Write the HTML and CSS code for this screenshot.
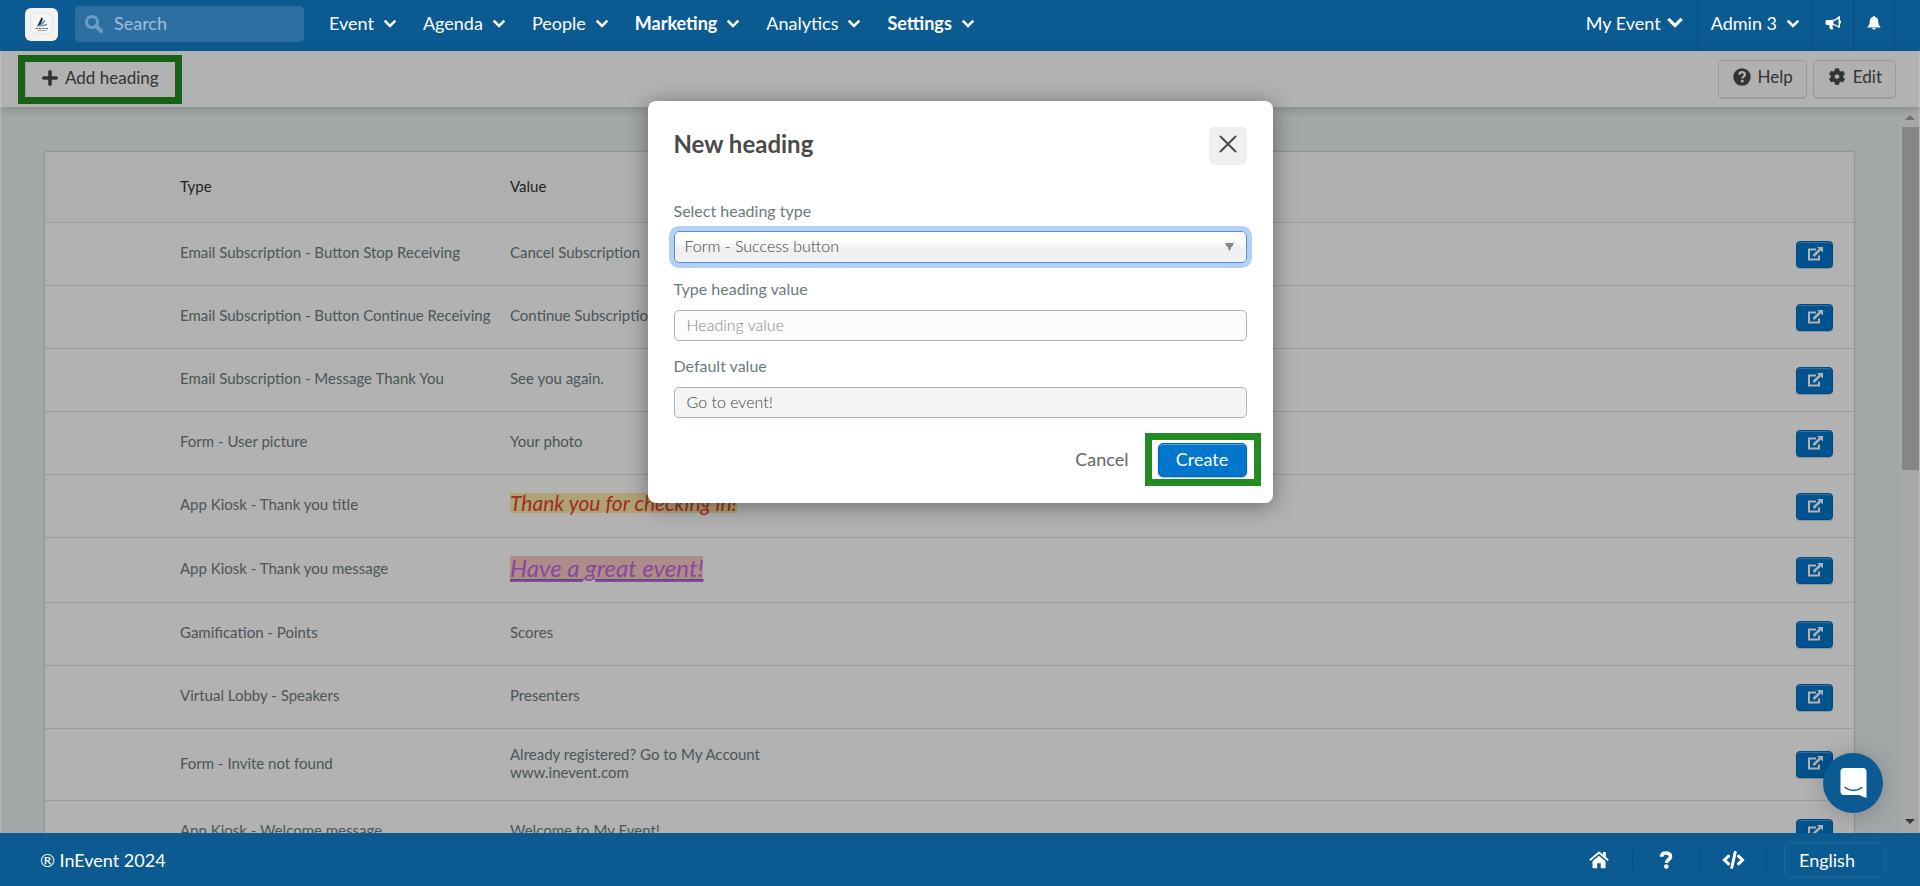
FILE: index.html
```html
<!DOCTYPE html>
<html lang="en">
<head>
<meta charset="utf-8">
<title>InEvent – Headings</title>
<link rel="stylesheet" href="styles.css">
</head>
<body>
<svg class="defs" width="0" height="0" aria-hidden="true">
  <symbol id="chevron" viewBox="0 0 12 8"><path d="M1.500 1.500 6 6l4.500-4.500" fill="none" stroke="currentColor" stroke-width="2.500" stroke-linecap="square"/></symbol>
  <symbol id="external" viewBox="0 0 16 14"><path d="M9 2.500H2v10h10V8.500" fill="none" stroke="currentColor" stroke-width="2"/><path d="M6.500 9 13 2.500" stroke="currentColor" stroke-width="2.500"/><path d="M10 0h6v5.500z" fill="currentColor"/></symbol>
</svg>

<header class="topbar">
  <a class="logo" href="#" aria-label="InEvent home">
    <svg viewBox="0 0 33 33" width="33" height="33"><rect x="5.500" y="5" width="22" height="21" rx="6" fill="#f5f5f5" stroke="#e2e2e2"/><path d="M16.500 9.500l1.500.8-2.500 6.700-3.500 1.500z" fill="#222"/><path d="M19.500 12l1 1-4 4.500-4 1z" fill="#3f8fc4"/><path d="M22.500 15.500l-1.500 2-7 1.200z" fill="#3a6a8c"/><path d="M10.500 20.500h13" stroke="#666" stroke-dasharray="2.500 .8"/><path d="M13 22.500h9" stroke="#888" stroke-dasharray="1.500 .7"/></svg>
  </a>
  <label class="search">
    <svg viewBox="0 0 18 18" width="18" height="18"><circle cx="7" cy="7" r="5.500" fill="none" stroke="currentColor" stroke-width="3"/><path d="M11 11l5 5" stroke="currentColor" stroke-width="4" stroke-linecap="round"/></svg>
    <input type="search" placeholder="Search" aria-label="Search">
  </label>
  <nav class="menu">
    <a href="#">Event <svg class="chev"><use href="#chevron"/></svg></a>
    <a href="#">Agenda <svg class="chev"><use href="#chevron"/></svg></a>
    <a href="#">People <svg class="chev"><use href="#chevron"/></svg></a>
    <a href="#" class="strong">Marketing <svg class="chev"><use href="#chevron"/></svg></a>
    <a href="#">Analytics <svg class="chev"><use href="#chevron"/></svg></a>
    <a href="#" class="strong">Settings <svg class="chev"><use href="#chevron"/></svg></a>
  </nav>
  <div class="account">
    <a class="cell" href="#">My Event <svg class="chev big"><use href="#chevron"/></svg></a>
    <a class="cell" href="#">Admin 3 <svg class="chev"><use href="#chevron"/></svg></a>
    <a class="cell icon" href="#" aria-label="Announcements"><svg viewBox="0 0 16 14" width="16" height="14" fill="currentColor"><path fill-rule="evenodd" d="M14 0c.6 0 1 .4 1 1v3.500a1.500 1.500 0 0 1 0 3V11c0 .6-.4 1-1 1-2-1.600-4-2.500-6-2.800-.7.300-.8 1-.3 1.500-.4.600 0 1.200.8 1.800-.5 1.200-2.600 1.200-3.500.5-.5-1.300-1-2.500-.6-4H2A1.500 1.500 0 0 1 .5 7.500v-2A1.500 1.500 0 0 1 2 4h4.500C9 4 11.500 2.700 14 0zm-.5 2.500c-1.600 1.400-3.300 2.300-5 2.600v2.800c1.700.3 3.400 1.100 5 2.400z"/></svg></a>
    <a class="cell icon" href="#" aria-label="Notifications"><svg viewBox="0 0 14 14" width="14" height="14" fill="currentColor"><path d="M7 0c.7 0 1 .4 1 1 2.200.5 3.200 2 3.200 4.500 0 2.600.8 4 2.300 5 0 .6-.4 1-1 1h-11c-.6 0-1-.4-1-1 1.500-1 2.300-2.400 2.300-5C2.800 3 3.800 1.500 6 1c0-.6.300-1 1-1zM5.300 12h3.400c-.2 1-.8 1.700-1.700 1.700S5.500 13 5.300 12z"/></svg></a>
  </div>
</header>

<main class="stage">
  <div class="toolbar">
    <div class="highlight highlight-add"><button class="tool flat" type="button"><svg viewBox="0 0 16 16" width="16" height="16"><path d="M8 1.800v12.400M1.800 8h12.400" stroke="currentColor" stroke-width="3.600" stroke-linecap="round"/></svg>Add heading</button></div>
    <div class="tools">
      <button class="tool" type="button"><svg viewBox="0 0 18 18" width="18" height="18"><circle cx="9" cy="9" r="8.700" fill="currentColor"/><path d="M6.200 6.700C6.500 4.900 7.600 4.200 9 4.200c1.700 0 2.900 1 2.900 2.400 0 2-2.600 1.900-2.600 3.900" fill="none" stroke="#fff" stroke-width="2.200"/><circle cx="9.300" cy="13.200" r="1.400" fill="#fff"/></svg>Help</button>
      <button class="tool" type="button"><svg viewBox="0 0 18 18" width="18" height="18"><path fill="currentColor" fill-rule="evenodd" stroke="currentColor" stroke-width=".8" stroke-linejoin="round" d="M7.300.8h3.400l.5 2.300 1.500.8 2.200-.7 1.700 2.900-1.700 1.600v1.700l1.700 1.600-1.700 3-2.200-.7-1.500.8-.5 2.300H7.300l-.5-2.300-1.500-.8-2.200.7-1.700-3 1.700-1.600V7.700L1.400 6.100l1.700-2.900 2.200.7 1.500-.8zM9 5.900a2.700 2.700 0 1 0 0 5.400A2.700 2.700 0 0 0 9 5.900z"/></svg>Edit</button>
    </div>
  </div>

  <div class="scroller">
    <div class="page">
      <table class="grid">
        <colgroup><col class="c-pad"><col class="c-type"><col><col class="c-act"></colgroup>
        <thead><tr><th></th><th scope="col">Type</th><th scope="col">Value</th><th></th></tr></thead>
        <tbody>
          <tr><td></td><td>Email Subscription - Button Stop Receiving</td><td>Cancel Subscription</td><td><button class="edit" type="button" aria-label="Edit"><svg><use href="#external"/></svg></button></td></tr>
          <tr><td></td><td>Email Subscription - Button Continue Receiving</td><td>Continue Subscription</td><td><button class="edit" type="button" aria-label="Edit"><svg><use href="#external"/></svg></button></td></tr>
          <tr><td></td><td>Email Subscription - Message Thank You</td><td>See you again.</td><td><button class="edit" type="button" aria-label="Edit"><svg><use href="#external"/></svg></button></td></tr>
          <tr><td></td><td>Form - User picture</td><td>Your photo</td><td><button class="edit" type="button" aria-label="Edit"><svg><use href="#external"/></svg></button></td></tr>
          <tr><td></td><td>App Kiosk - Thank you title</td><td><em class="thanks">Thank you for checking in!</em></td><td><button class="edit" type="button" aria-label="Edit"><svg><use href="#external"/></svg></button></td></tr>
          <tr class="tall"><td></td><td>App Kiosk - Thank you message</td><td><em class="great"><span>Have a great event!</span></em></td><td><button class="edit" type="button" aria-label="Edit"><svg><use href="#external"/></svg></button></td></tr>
          <tr><td></td><td>Gamification - Points</td><td>Scores</td><td><button class="edit" type="button" aria-label="Edit"><svg><use href="#external"/></svg></button></td></tr>
          <tr><td></td><td>Virtual Lobby - Speakers</td><td>Presenters</td><td><button class="edit" type="button" aria-label="Edit"><svg><use href="#external"/></svg></button></td></tr>
          <tr class="double"><td></td><td>Form - Invite not found</td><td>Already registered? Go to My Account<br>www.inevent.com</td><td><button class="edit" type="button" aria-label="Edit"><svg><use href="#external"/></svg></button></td></tr>
          <tr><td></td><td>App Kiosk - Welcome message</td><td>Welcome to My Event!</td><td><button class="edit" type="button" aria-label="Edit"><svg><use href="#external"/></svg></button></td></tr>
        </tbody>
      </table>
    </div>
    <div class="bar" aria-hidden="true"><i class="up"></i><i class="thumb"></i><i class="down"></i></div>
  </div>

  <div class="overlay">
    <form class="modal" role="dialog" aria-labelledby="title">
      <div class="modal-head">
        <h1 id="title">New heading</h1>
        <button class="close" type="button" aria-label="Close"><svg viewBox="0 0 18 18" width="18" height="18"><path d="M1.500 1.500l15 15M16.500 1.500l-15 15" stroke="currentColor" stroke-width="2" stroke-linecap="round"/></svg></button>
      </div>
      <label for="type">Select heading type</label>
      <select id="type"><option>Form - Success button</option></select>
      <label for="value">Type heading value</label>
      <input id="value" type="text" placeholder="Heading value">
      <label for="default">Default value</label>
      <input id="default" type="text" value="Go to event!" readonly>
      <div class="actions">
        <button class="cancel" type="button">Cancel</button>
        <div class="highlight highlight-create"><button class="create" type="submit">Create</button></div>
      </div>
    </form>
  </div>
</main>

<footer class="footer">
  <span>® InEvent 2024</span>
  <div class="links">
    <a href="#" aria-label="Home"><svg viewBox="0 0 20 18" width="20" height="18" fill="currentColor"><path d="M10 4.800l6.500 5.500v6.200c0 .5-.3.800-.8.800h-3.900v-5H8.200v5H4.300c-.5 0-.8-.3-.8-.8v-6.200z"/><path d="M.8 9.300L10 1.500l9.200 7.800" fill="none" stroke="currentColor" stroke-width="1.900"/><path d="M14 1h2.800v6L14 4.500z"/></svg></a>
    <a href="#" aria-label="Help"><svg viewBox="0 0 14 18" width="14" height="18"><path d="M2.300 5.800C2.700 3 4.500 2 7 2c2.800 0 4.500 1.500 4.500 3.500 0 3.200-4 2.800-4 6.500" fill="none" stroke="currentColor" stroke-width="3.600"/><circle cx="7.300" cy="15.600" r="2.300" fill="currentColor"/></svg></a>
    <a href="#" aria-label="Embed"><svg viewBox="0 0 23 18" width="23" height="18"><path d="M6.500 5.200L2.500 9l4 3.800M16.500 5.200l4 3.800-4 3.800M13.200 1.500l-3.400 15" fill="none" stroke="currentColor" stroke-width="3" stroke-linecap="round"/></svg></a>
    <select class="lang" aria-label="Language"><option>English</option></select>
  </div>
</footer>

<button class="chat" type="button" aria-label="Open chat"><svg viewBox="0 0 27 30" width="27" height="30"><path d="M4 0h19a3.500 3.500 0 0 1 3.500 3.500V30L19 27H4a3.500 3.500 0 0 1-3.500-3.500v-20A3.500 3.500 0 0 1 4 0z" fill="#fff"/><path d="M5 19.500c5 4 12 4 17 0" fill="none" stroke="#0c5a92" stroke-width="1.600" stroke-linecap="round"/></svg></button>
</body>
</html>
```
FILE: styles.css
```css
* { box-sizing: border-box; }
body {
  margin: 0;
  height: 100vh;
  display: flex;
  flex-direction: column;
  overflow: hidden;
  font: 15px/18px Lato, "Open Sans", sans-serif;
  color: #6d7a7d;
  background: #e9f0f1;
}
a { color: inherit; text-decoration: none; }
button, input, select { font: inherit; color: inherit; }
button { cursor: pointer; }
.defs { position: absolute; }

.topbar {
  flex: none;
  display: flex;
  align-items: center;
  height: 51px;
  padding: 0 25px;
  background: #0c5a92;
  color: #fff;
  font-size: 18px;
  line-height: 24px;
}
.logo { display: flex; margin: 0 17px 3px 0; border-radius: 6px; background: #f2f2f2; }
.search {
  display: flex;
  align-items: center;
  gap: 11px;
  width: 229px;
  height: 36px;
  margin-bottom: 3px;
  padding: 0 10px;
  border-radius: 5px;
  background: #2e6fa2;
  color: #6d9dc3;
}
.search input { min-width: 0; flex: 1; padding: 0 0 2px; border: 0; outline: 0; background: none; }
.search input::placeholder { color: #9dbfd9; opacity: 1; }
.menu { display: flex; gap: 27px; margin: 0 0 6px 25px; }
.menu a { display: flex; align-items: center; gap: 10px; }
.strong { font-weight: 700; }
.chev { width: 12px; height: 8px; margin-top: 3px; }
.chev.big { width: 16px; height: 10px; margin-top: 0; }
.account { display: flex; align-self: stretch; margin-left: auto; }
.cell {
  display: flex;
  justify-content: center;
  gap: 10px;
  align-items: center;
  padding: 0 13px 6px;
  border-right: 1px solid #0a4c7d;
}
.cell:first-child { gap: 6px; padding-right: 14px; }
.cell.icon { width: 41px; padding: 0 0 6px; }

.stage { flex: 1; min-height: 0; display: flex; flex-direction: column; position: relative; }
.toolbar {
  flex: none;
  display: flex;
  justify-content: space-between;
  align-items: flex-start;
  height: 56px;
  padding: 4px 24px 0 18px;
  background: #fff;
  box-shadow: 0 2px 10px rgba(0, 0, 0, .2);
  z-index: 1;
}
.highlight { border: 7px solid #228b22; }
.highlight-add { width: 164px; height: 49px; }
.tools { display: flex; gap: 6px; padding-top: 5px; }
.tool {
  display: flex;
  align-items: center;
  gap: 7px;
  height: 39px;
  padding: 0 13px 4px 14px;
  border: 1px solid #ddd;
  border-bottom-width: 2px;
  border-radius: 5px;
  background: #fdfdfd;
  color: #4a4a4a;
  font-size: 17px;
  line-height: 24px;
  white-space: nowrap;
}
.tool.flat { height: 35px; padding: 0 0 3px 16px; border-width: 0 0 0 1px; background: none; }

.scroller { flex: 1; min-height: 0; display: flex; overflow: hidden; }
.page { flex: 1; padding: 45px 46px 0 45px; }
.grid {
  width: 100%;
  table-layout: fixed;
  border-collapse: collapse;
  background: #fff;
  box-shadow: 0 0 2px rgba(0, 0, 0, .35);
}
.c-pad { width: 125px; }
.c-type { width: 330px; }
.c-act { width: 75px; }
.grid th, .grid td { height: 63px; padding: 0 10px; border-bottom: 1px solid #e0e0e0; text-align: left; vertical-align: middle; white-space: nowrap; }
.grid th { height: 70px; padding-bottom: 2px; background: #fbfbfb; color: #333; font-weight: 400; }
.grid td { padding-bottom: 4px; }
.grid td:last-child { padding: 2px 21px 0 0; }
.grid .tall td { height: 65px; }
.grid .double td { height: 72px; padding-bottom: 2px; }
.edit {
  display: flex;
  align-items: center;
  justify-content: center;
  width: 37px;
  height: 27px;
  margin-left: auto;
  padding: 0 0 2px;
  border: 1px solid #0067b5;
  border-radius: 4px;
  background: #0077cc;
  color: #fff;
  box-shadow: inset 0 1px 0 #4ba3e0, 0 1px 1px rgba(0, 0, 0, .2);
}
.edit svg { width: 16px; height: 14px; }
.thanks { display: inline-block; font-size: 21px; line-height: 20px; color: #e8402f; background: #fbe9a8; }
.great {
  display: inline-block;
  font-size: 24px;
  line-height: 24px;
  color: #6d7a7d;
  background: #f9cac5;
  text-decoration: underline 1px;
  text-underline-offset: 2px;
}
.great span { color: #c468e4; text-decoration: underline 2px; text-underline-offset: 3px; }
.bar { flex: none; width: 20px; display: flex; flex-direction: column; align-items: center; padding: 8px 0 9px; background: #f1f1f1; }
.up, .down { border: 5px solid transparent; }
.up { border-top: 0; border-bottom-color: #a3a3a3; }
.down { border-bottom: 0; border-top-color: #505050; margin-top: auto; }
.thumb { width: 17px; height: 343px; margin-top: 7px; background: #c1c1c1; }

.overlay {
  position: absolute;
  inset: 0;
  z-index: 2;
  display: flex;
  justify-content: center;
  align-items: flex-start;
  padding-top: 50px;
  border: solid rgba(255, 255, 255, .2);
  border-width: 0 1px;
  background: rgba(0, 0, 0, .3);
}
.modal {
  display: flex;
  flex-direction: column;
  width: 625px;
  padding: 26px 26px 17px;
  border-radius: 8px;
  background: #fff;
  box-shadow: 0 3px 22px rgba(0, 0, 0, .4);
  font-size: 16px;
  line-height: 20px;
}
.modal-head { display: flex; justify-content: space-between; align-items: flex-start; margin-bottom: 36px; }
h1 { margin: 0; font-size: 24px; line-height: 34px; font-weight: 700; color: #4a4a4a; }
.close { width: 38px; height: 38px; padding: 0 0 4px; display: flex; align-items: center; justify-content: center; border: 0; border-radius: 5px; background: #efefef; color: #4a4a4a; }
.modal input, .modal select {
  width: 100%;
  height: 31px;
  margin: 11px 0 15px;
  padding: 0 12px 2px;
  border: 1px solid #a9b5bc;
  border-radius: 5px;
  outline: 0;
  background: #fcfcfc;
  color: #666;
  font-weight: 300;
}
.modal input::placeholder { color: #888; opacity: 1; }
.modal input[readonly] { background: #f4f4f4; color: #444; }
.modal select {
  height: 32px;
  margin: 10px 0 16px;
  padding: 0 10px 2px;
  appearance: none;
  border-color: #4a90e2;
  color: #444;
  box-shadow: 0 0 0 5px #b4d1f4;
  background:
    conic-gradient(from -29deg at 50% 100%, #888 58deg, transparent 0) right 12px top 11px / 9px 8px no-repeat,
    linear-gradient(#fff 20%, #f6f6f6 50%, #eee 52%, #f4f4f4);
}
.actions { display: flex; align-items: center; justify-content: flex-end; gap: 16px; margin-right: -14px; font-size: 18px; line-height: 24px; }
.cancel { border: 0; padding: 0 0 2px; background: none; color: #666; }
.highlight-create { padding: 3px 7px 2px 6px; }
.create {
  display: block;
  width: 89px;
  height: 34px;
  padding: 0 0 3px;
  border: 1px solid #0067b5;
  border-radius: 5px;
  background: #0077cc;
  color: #fff;
  box-shadow: inset 0 1px 0 #4ba3e0, 0 1px 2px rgba(0, 0, 0, .3);
}

.footer {
  flex: none;
  display: flex;
  align-items: center;
  justify-content: space-between;
  height: 53px;
  padding: 0 35px 0 40px;
  background: #0c5a92;
  color: #fff;
  font-size: 18px;
  line-height: 24px;
}
.links { display: flex; align-items: center; }
.links a { display: flex; justify-content: center; align-items: center; width: 67px; height: 20px; border-right: 1px solid #0a4c7d; }
.lang { appearance: none; width: 101px; height: 36px; margin-left: 17px; padding: 0 14px; border: 1px solid #1d659b; border-radius: 5px; background: none; }
.chat {
  position: fixed;
  right: 37px;
  bottom: 73px;
  z-index: 5;
  display: flex;
  align-items: center;
  justify-content: center;
  width: 60px;
  height: 60px;
  padding: 0;
  border: 0;
  border-radius: 50%;
  background: #0c5a92;
  box-shadow: 0 2px 24px rgba(0, 0, 0, .2);
}
```
